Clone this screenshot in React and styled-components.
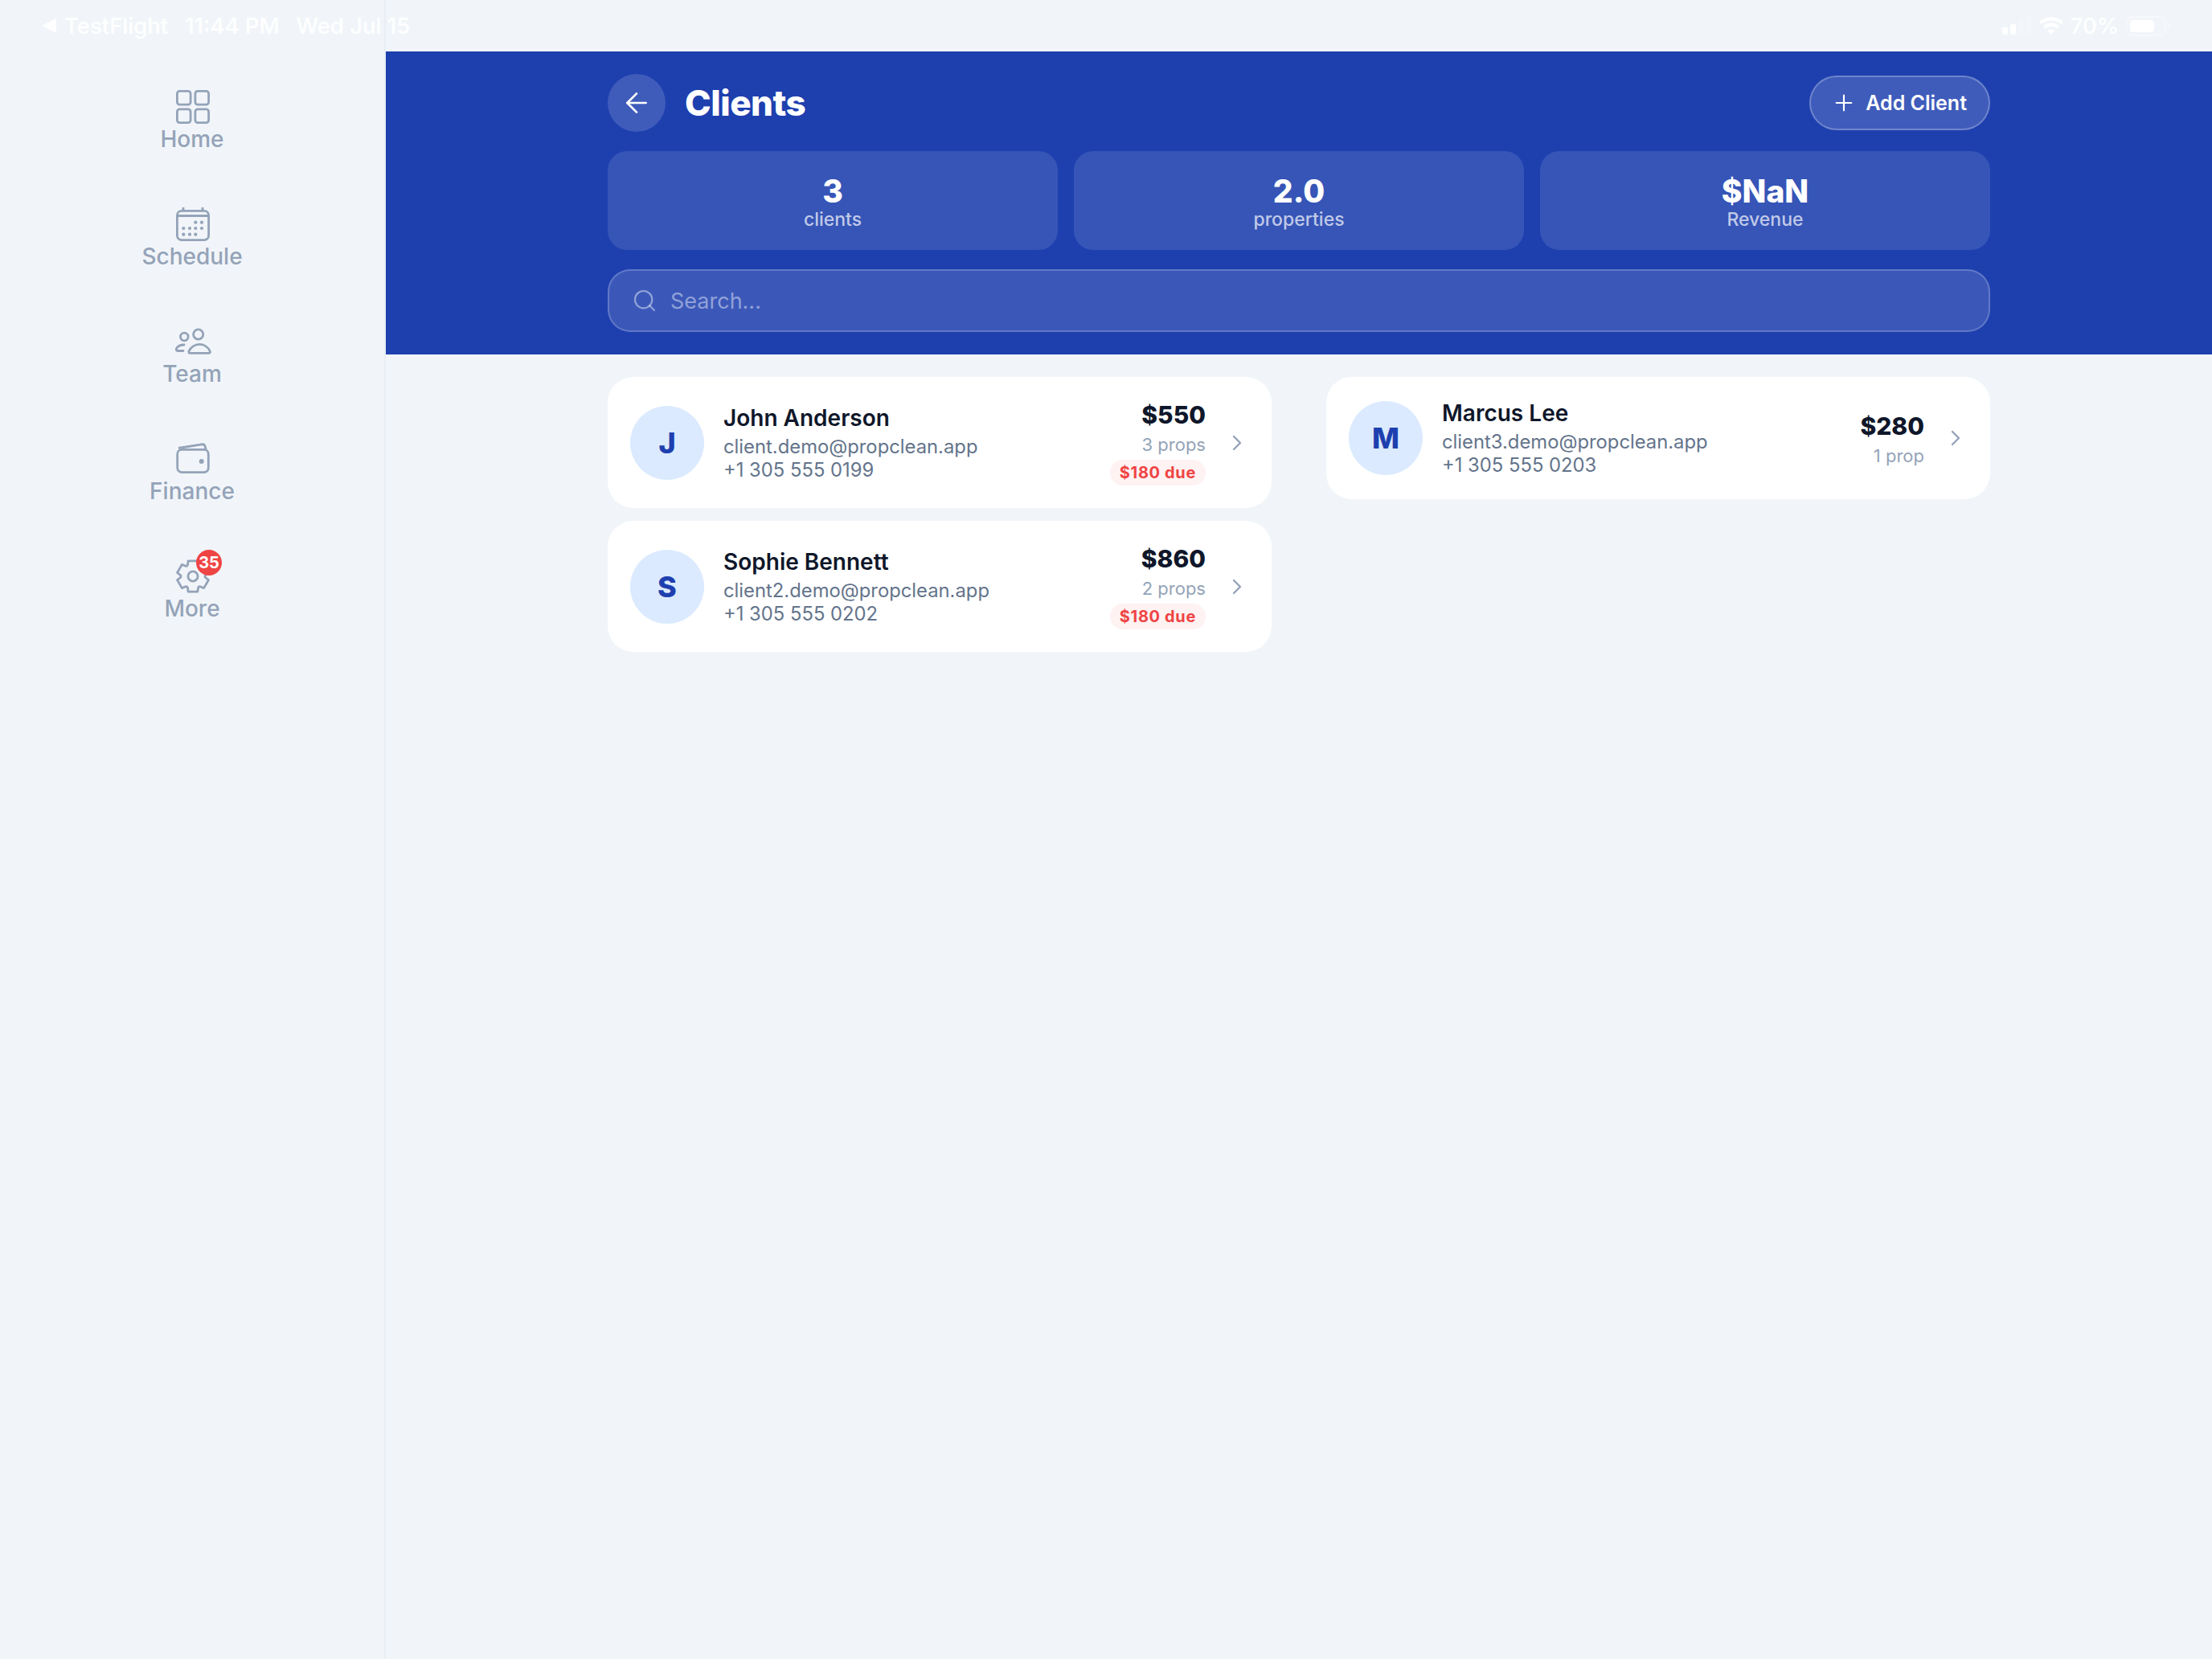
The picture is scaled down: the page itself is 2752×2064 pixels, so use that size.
import React from "react";
import styled, { createGlobalStyle } from "styled-components";
import { ArrowLeft, ChevronRight, Plus, Search } from "lucide-react";

const clients = [
  [
    { initial: "J", name: "John Anderson", email: "client.demo@propclean.app", phone: "+1 305 555 0199", total: "$550", props: "3 props", due: "$180 due" },
    { initial: "S", name: "Sophie Bennett", email: "client2.demo@propclean.app", phone: "+1 305 555 0202", total: "$860", props: "2 props", due: "$180 due" },
  ],
  [
    { initial: "M", name: "Marcus Lee", email: "client3.demo@propclean.app", phone: "+1 305 555 0203", total: "$280", props: "1 prop" },
  ],
];

const stats = [
  { value: "3", label: "clients" },
  { value: "2.0", label: "properties" },
  { value: "$NaN", label: "Revenue" },
];

// six flat teeth round the middle of the 48 box
const gearPath = () => {
  const pt = (deg, r) => {
    const a = (deg * Math.PI) / 180;
    return `${(24 + r * Math.cos(a)).toFixed(2)} ${(24 + r * Math.sin(a)).toFixed(2)}`;
  };
  let d = "";
  for (let i = 0; i < 6; i++) {
    const c = -90 + i * 60;
    d += `${i ? "L" : "M"}${pt(c - 17, 20)} L${pt(c + 17, 20)} L${pt(c + 25, 15.500)} Q${pt(c + 30, 14.500)} ${pt(c + 35, 15.500)} `;
  }
  return d + "Z";
};

const HomeIcon = () => (
  <svg width="48" height="48" viewBox="0 0 48 48" fill="none" stroke="currentColor" strokeWidth="2.8">
    <rect x="4.4" y="4.4" width="16.7" height="16.7" rx="3" />
    <rect x="26.9" y="4.4" width="16.7" height="16.7" rx="3" />
    <rect x="4.4" y="26.9" width="16.7" height="16.7" rx="3" />
    <rect x="26.9" y="26.9" width="16.7" height="16.7" rx="3" />
  </svg>
);

const CalendarIcon = () => (
  <svg width="48" height="48" viewBox="0 0 48 48" fill="none" stroke="currentColor" strokeWidth="2.8">
    <rect x="4.4" y="7.4" width="39.2" height="36.2" rx="5.5" />
    <path d="M4.4 13.500h39.2M12 3v4.500M36 3v4.500" />
    <g fill="currentColor" stroke="none">
      <circle cx="27.300" cy="21.700" r="2.100" /><circle cx="35" cy="21.700" r="2.100" />
      <circle cx="12.300" cy="29" r="2.100" /><circle cx="20" cy="29" r="2.100" /><circle cx="27.300" cy="29" r="2.100" /><circle cx="35" cy="29" r="2.100" />
      <circle cx="12.300" cy="36.700" r="2.100" /><circle cx="20" cy="36.700" r="2.100" /><circle cx="27.300" cy="36.700" r="2.100" />
    </g>
  </svg>
);

const TeamIcon = () => (
  <svg width="48" height="48" viewBox="0 0 48 48" fill="none" stroke="currentColor" strokeWidth="2.8">
    <circle cx="13.300" cy="18" r="4.800" />
    <circle cx="30.700" cy="15" r="6.100" />
    <path d="M12 35.500H5.300c-2 0-2.500-1.400-1.700-3 1.400-2.600 4.800-4.500 9.400-4.500" strokeLinecap="round" />
    <path d="M20.500 38.300H44c1.300 0 1.600-1 1.200-2.300C43 31 38 27.400 32.200 27.400S21 31 19 36c-.4 1.300.2 2.300 1.500 2.300z" />
  </svg>
);

const WalletIcon = () => (
  <svg width="48" height="48" viewBox="0 0 48 48" fill="none" stroke="currentColor" strokeWidth="2.8">
    <rect x="4.700" y="12.400" width="38.600" height="28.200" rx="5.500" />
    <path d="M6 10.500 35 5.800c2.400-.4 3.700.8 4.200 2.700l1 3.900" />
    <circle cx="34.700" cy="27" r="3" fill="currentColor" stroke="none" />
  </svg>
);

const GearIcon = () => (
  <svg width="48" height="48" viewBox="0 0 48 48" fill="none" stroke="currentColor" strokeWidth="2.8" strokeLinejoin="round">
    <path d={gearPath()} />
    <circle cx="24" cy="24" r="6.100" />
  </svg>
);

const navItems = [
  { label: "Home", Icon: HomeIcon },
  { label: "Schedule", Icon: CalendarIcon },
  { label: "Team", Icon: TeamIcon },
  { label: "Finance", Icon: WalletIcon },
  { label: "More", Icon: GearIcon, badge: "35" },
];

const App = () => (
  <>
    <GlobalStyle />
    <Screen>
      <StatusBar>
        <StatusGroup>
          <BackCaret />
          <span>TestFlight</span>
          <span>11:44 PM</span>
          <span>Wed Jul 15</span>
        </StatusGroup>
        <StatusGroup $tight>
          <Signal>
            <SignalBar $h={9} $on />
            <SignalBar $h={13} $on />
            <SignalBar $h={18} />
            <SignalBar $h={22} />
          </Signal>
          <svg width="30" height="22" viewBox="0 0 30 22" fill="#fff">
            <path d="M15 22l-4.500-4.800a6.500 6.500 0 0 1 9 0zM8 14.700 5 11.500a14.500 14.500 0 0 1 20 0l-3 3.200a10 10 0 0 0-14 0zM2.800 9.200 0 6.200a22 22 0 0 1 30 0l-2.800 3a18 18 0 0 0-24.400 0z" />
          </svg>
          <span>70%</span>
          <Battery>
            <BatteryFill />
          </Battery>
        </StatusGroup>
      </StatusBar>

      <Sidebar>
        {navItems.map(({ label, Icon, badge }) => (
          <NavItem key={label}>
            <NavIcon>
              <Icon />
              {badge && <NavBadge>{badge}</NavBadge>}
            </NavIcon>
            <NavLabel>{label}</NavLabel>
          </NavItem>
        ))}
      </Sidebar>

      <Main>
        <Hero>
          <Inner>
            <TitleRow>
              <TitleGroup>
                <BackButton>
                  <ArrowLeft size={40} strokeWidth={1.6} />
                </BackButton>
                <Title>Clients</Title>
              </TitleGroup>
              <AddButton>
                <Plus size={32} strokeWidth={1.6} />
                Add Client
              </AddButton>
            </TitleRow>
            <StatsGrid>
              {stats.map((s) => (
                <StatCard key={s.label}>
                  <StatValue>{s.value}</StatValue>
                  <StatLabel>{s.label}</StatLabel>
                </StatCard>
              ))}
            </StatsGrid>
            <SearchBox>
              <Search size={32} strokeWidth={1.6} />
              <span>Search...</span>
            </SearchBox>
          </Inner>
        </Hero>
        <Columns>
          {clients.map((col, i) => (
            <Column key={i}>
              {col.map((c) => (
                <ClientCard key={c.name}>
                  <Avatar>{c.initial}</Avatar>
                  <ClientInfo>
                    <ClientName>{c.name}</ClientName>
                    <ClientLine $first>{c.email}</ClientLine>
                    <ClientLine>{c.phone}</ClientLine>
                  </ClientInfo>
                  <ClientMeta $plain={!c.due}>
                    <Total>{c.total}</Total>
                    <PropCount>{c.props}</PropCount>
                    {c.due && <DuePill>{c.due}</DuePill>}
                  </ClientMeta>
                  <Chevron>
                    <ChevronRight size={32} strokeWidth={1.8} />
                  </Chevron>
                </ClientCard>
              ))}
            </Column>
          ))}
        </Columns>
      </Main>
    </Screen>
  </>
);

export default App;

const GlobalStyle = createGlobalStyle`
  html, body {
    margin: 0;
    background: #f1f5f9;
  }
  * {
    box-sizing: border-box;
  }
  body {
    font-family: "Inter", "Liberation Sans", sans-serif;
  }
`;

const Screen = styled.div`
  position: relative;
  display: flex;
  width: 2752px;
  height: 2064px;
  overflow: hidden;
  background: #f1f5f9;
`;

const StatusBar = styled.div`
  position: absolute;
  top: 0;
  left: 0;
  right: 0;
  height: 64px;
  padding: 0 57px 0 52px;
  display: flex;
  justify-content: space-between;
  align-items: center;
  color: #fff;
  font-size: 27.5px;
  font-weight: 500;
  z-index: 2;
`;

const StatusGroup = styled.div`
  display: flex;
  align-items: center;
  gap: ${(p) => (p.$tight ? "9px" : "21px")};
`;

const BackCaret = styled.div`
  width: 18px;
  height: 18px;
  margin-right: -11px;
  background: #fff;
  clip-path: polygon(0 50%, 100% 0, 100% 100%);
`;

const Signal = styled.div`
  display: flex;
  align-items: flex-end;
  gap: 3px;
  height: 22px;
`;

const SignalBar = styled.div`
  width: 7px;
  height: ${(p) => p.$h}px;
  border-radius: 2px;
  background: ${(p) => (p.$on ? "#fff" : "rgba(255, 255, 255, 0.25)")};
`;

const Battery = styled.div`
  position: relative;
  width: 50px;
  height: 25px;
  padding: 3px;
  border: 2px solid rgba(255, 255, 255, 0.35);
  border-radius: 8px;
  &::after {
    content: "";
    position: absolute;
    right: -7px;
    top: 7px;
    width: 3px;
    height: 7px;
    border-radius: 0 2px 2px 0;
    background: rgba(255, 255, 255, 0.4);
  }
`;

const BatteryFill = styled.div`
  width: 30px;
  height: 100%;
  border-radius: 4px;
  background: #fff;
`;

const Sidebar = styled.nav`
  flex: 0 0 480px;
  height: 100%;
  padding-top: 109px;
  display: flex;
  flex-direction: column;
  align-items: center;
  border-right: 2px solid #e9eef4;
`;

const NavItem = styled.div`
  height: 146px;
  display: flex;
  flex-direction: column;
  align-items: center;
  color: #94a3b8;
`;

const NavIcon = styled.div`
  position: relative;
  width: 48px;
  height: 47px;
  margin-left: 2px;
  svg {
    display: block;
  }
`;

const NavBadge = styled.div`
  position: absolute;
  top: -9px;
  right: -12px;
  width: 32px;
  height: 32px;
  border-radius: 50%;
  background: #ef4444;
  color: #fff;
  font-size: 20px;
  font-weight: 700;
  line-height: 32px;
  text-align: center;
`;

const NavLabel = styled.div`
  font-size: 28px;
  font-weight: 500;
  line-height: 34px;
`;

const Main = styled.main`
  flex: 1;
  min-width: 0;
  padding-top: 64px;
`;

const Hero = styled.header`
  background: #1e40af;
  padding: 28px 0;
`;

const Inner = styled.div`
  width: 1720px;
  margin: 0 auto;
  display: flex;
  flex-direction: column;
  gap: 24px;
`;

const TitleRow = styled.div`
  display: flex;
  justify-content: space-between;
  align-items: center;
`;

const TitleGroup = styled.div`
  display: flex;
  align-items: center;
  gap: 24px;
`;

const BackButton = styled.div`
  width: 72px;
  height: 72px;
  border-radius: 50%;
  display: flex;
  align-items: center;
  justify-content: center;
  background: rgba(255, 255, 255, 0.15);
  color: #fff;
`;

const Title = styled.h1`
  margin: 0;
  color: #fff;
  font-size: 44px;
  font-weight: 800;
  letter-spacing: -0.5px;
`;

const AddButton = styled.div`
  height: 68px;
  padding: 0 27px 0 25px;
  display: flex;
  align-items: center;
  gap: 11px;
  border-radius: 34px;
  border: 2px solid rgba(255, 255, 255, 0.25);
  background: rgba(255, 255, 255, 0.15);
  color: #fff;
  font-size: 25px;
  font-weight: 600;
`;

const StatsGrid = styled.div`
  display: grid;
  grid-template-columns: repeat(3, 1fr);
  gap: 20px;
`;

const StatCard = styled.div`
  height: 123px;
  padding-top: 30px;
  display: flex;
  flex-direction: column;
  align-items: center;
  border-radius: 24px;
  background: rgba(255, 255, 255, 0.11);
`;

const StatValue = styled.div`
  color: #fff;
  font-size: 39px;
  font-weight: 800;
  line-height: 40px;
`;

const StatLabel = styled.div`
  color: rgba(255, 255, 255, 0.7);
  font-size: 23px;
  font-weight: 500;
  line-height: 30px;
`;

const SearchBox = styled.div`
  height: 78px;
  padding: 0 28px;
  display: flex;
  align-items: center;
  gap: 16px;
  border-radius: 28px;
  border: 2px solid rgba(255, 255, 255, 0.2);
  background: rgba(255, 255, 255, 0.13);
  color: rgba(255, 255, 255, 0.45);
  font-size: 27px;
`;

const Columns = styled.div`
  width: 1720px;
  margin: 28px auto 0;
  display: grid;
  grid-template-columns: 826px 826px;
  justify-content: space-between;
  align-items: start;
`;

const Column = styled.div`
  display: flex;
  flex-direction: column;
  gap: 16px;
`;

const ClientCard = styled.div`
  display: flex;
  align-items: center;
  padding: 28px 27px 28px 28px;
  border-radius: 32px;
  background: #fff;
`;

const Avatar = styled.div`
  flex: 0 0 92px;
  height: 92px;
  margin-right: 24px;
  border-radius: 50%;
  display: flex;
  align-items: center;
  justify-content: center;
  background: #dbeafe;
  color: #1e40af;
  font-size: 36px;
  font-weight: 800;
`;

const ClientInfo = styled.div`
  flex: 1;
  min-width: 0;
`;

const ClientName = styled.div`
  color: #0f172a;
  font-size: 28px;
  font-weight: 600;
  line-height: 34px;
`;

const ClientLine = styled.div`
  margin-top: ${(p) => (p.$first ? "4px" : "0")};
  color: #64748b;
  font-size: 23.8px;
  line-height: 29px;
`;

const ClientMeta = styled.div`
  display: flex;
  flex-direction: column;
  align-items: flex-end;
  padding-top: ${(p) => (p.$plain ? "3px" : "0")};
`;

const Total = styled.div`
  color: #0f172a;
  font-size: 30px;
  font-weight: 800;
  line-height: 38px;
`;

const PropCount = styled.div`
  margin-top: 3px;
  color: #94a3b8;
  font-size: 22px;
  line-height: 30px;
`;

const DuePill = styled.div`
  margin-top: 4px;
  height: 32px;
  padding: 0 12px;
  border-radius: 16px;
  background: #fef2f2;
  color: #ef4444;
  font-size: 20px;
  font-weight: 700;
  letter-spacing: 0.65px;
  line-height: 33px;
`;

const Chevron = styled.div`
  display: flex;
  margin-left: 23px;
  color: #94a3b8;
`;
